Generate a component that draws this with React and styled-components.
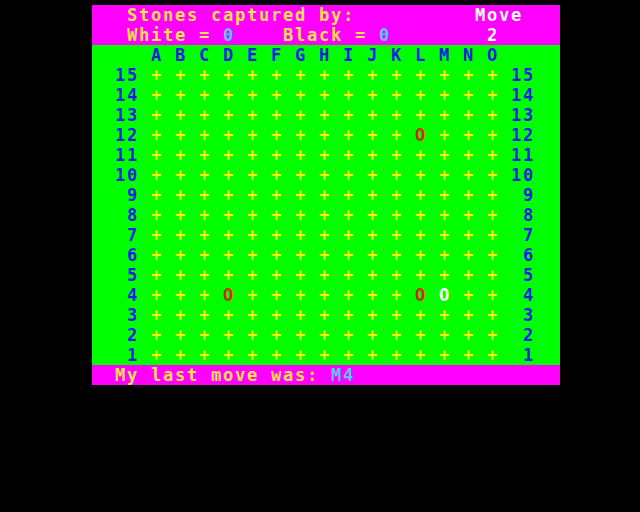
import React from 'react'
import styled, { createGlobalStyle } from 'styled-components'

const GlobalStyle = createGlobalStyle`
    html, body {
        margin: 0;
        background: #000;
    }
`

const colours = {
    yellow: '#ffe04a',
    white: '#ffffff',
    cyan: '#55c8ff',
    blue: '#0a22e0',
    plus: '#f4f400',
    red: '#d42a00',
}

const LETTERS = 'ABCDEFGHIJKLMNO'
const stones = {
    12: { 11: 'red' },
    4: { 3: 'red', 11: 'red', 12: 'white' },
}

function boardRow(n) {
    const segs = [[String(n).padStart(4, ' ') + ' ', 'blue']]
    for (let c = 0; c < 15; c++) {
        const stone = stones[n] && stones[n][c]
        segs.push(stone ? ['O', stone] : ['+', 'plus'])
        segs.push([' ', 'plus'])
    }
    segs.push([String(n).padStart(2, ' '), 'blue'])
    return segs
}

const lines = [
    { bg: 'magenta', segs: [['   Stones captured by:', 'yellow'], ['          Move', 'white']] },
    {
        bg: 'magenta',
        segs: [
            ['   White = ', 'yellow'], ['0', 'cyan'],
            ['    Black = ', 'yellow'], ['0', 'cyan'],
            ['        2', 'white'],
        ],
    },
    { bg: 'green', segs: [['     ' + LETTERS.split('').join(' '), 'blue']] },
    ...Array.from({ length: 15 }, (_, i) => ({ bg: 'green', segs: boardRow(15 - i) })),
    { bg: 'magenta', segs: [['  My last move was: ', 'yellow'], ['M4', 'cyan']] },
]

function App() {
    return (
        <Screen>
            <GlobalStyle />
            <Panel>
                {lines.map((line, i) => (
                    <Line key={i} $bg={line.bg}>
                        {line.segs.map(([text, tone], j) => (
                            <Glyph key={j} $tone={tone}>{text}</Glyph>
                        ))}
                    </Line>
                ))}
            </Panel>
        </Screen>
    )
}

export default App

const Screen = styled.main`
    width: 480px;
    margin: 0 auto;
    padding-top: 5px;
`

const Panel = styled.div`
    margin-left: 12px;
    width: 468px;
    display: flex;
    flex-direction: column;
`

const Line = styled.div`
    height: 20px;
    line-height: 20px;
    padding-left: 0;
    background: ${p => (p.$bg === 'green' ? '#00ff00' : '#ff00ff')};
    font-family: "DejaVu Sans Mono", monospace;
    font-size: 17px;
    font-weight: bold;
    letter-spacing: calc(12px - 1ch);
    white-space: pre;
    overflow: hidden;
    text-indent: -1px;
`

const Glyph = styled.span`
    color: ${p => colours[p.$tone]};
`
